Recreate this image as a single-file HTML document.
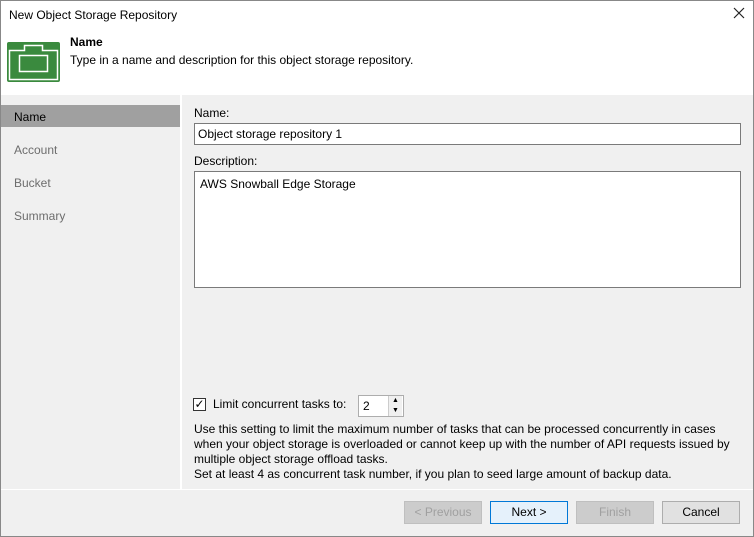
<!DOCTYPE html>
<html><head><style>
*{margin:0;padding:0;box-sizing:border-box}
body{width:754px;height:537px;overflow:hidden;font:12px "Liberation Sans",sans-serif;color:#000;background:#f0f0f0;position:relative}
.win{position:absolute;left:0;top:0;width:754px;height:537px;border:1px solid #888;}
.a{position:absolute;white-space:nowrap}
.btn{position:absolute;top:501px;height:23px;width:78px;border:1px solid #adadad;background:#e1e1e1;text-align:center;line-height:21px}
</style></head><body>
<div class="a" style="left:0;top:0;width:754px;height:95px;background:#fff"></div>
<div class="a" style="left:9px;top:8px">New Object Storage Repository</div>
<svg class="a" style="left:733px;top:7px" width="12" height="12" viewBox="0 0 12 12"><path d="M1 1L11 11M11 1L1 11" stroke="#222" stroke-width="1.2"/></svg>
<svg class="a" style="left:7px;top:42px" width="53" height="40" viewBox="0 0 53 40"><rect x="0" y="0" width="53" height="40" rx="2" fill="#3a8a3e"/><path d="M2.5 8.5H17.5V3.5H35.5V8.5H50.5V37.5H2.5Z" fill="none" stroke="#fff" stroke-width="1.5"/><rect x="12.5" y="13.5" width="28" height="16" fill="none" stroke="#fff" stroke-width="1.5"/></svg>
<div class="a" style="left:70px;top:35px;font-weight:bold">Name</div>
<div class="a" style="left:70px;top:53px">Type in a name and description for this object storage repository.</div>
<div class="a" style="left:180px;top:95px;width:2px;height:394px;background:#fff"></div>
<div class="a" style="left:1px;top:105px;width:179px;height:22px;background:#a0a0a0"></div>
<div class="a" style="left:14px;top:110px">Name</div>
<div class="a" style="left:14px;top:143px;color:#6d6d6d">Account</div>
<div class="a" style="left:14px;top:176px;color:#6d6d6d">Bucket</div>
<div class="a" style="left:14px;top:209px;color:#6d6d6d">Summary</div>
<div class="a" style="left:194px;top:106px">Name:</div>
<div class="a" style="left:194px;top:123px;width:547px;height:22px;background:#fff;border:1px solid #7a7a7a;padding:3px 3px">Object storage repository 1</div>
<div class="a" style="left:194px;top:154px">Description:</div>
<div class="a" style="left:194px;top:171px;width:547px;height:117px;background:#fff;border:1px solid #7a7a7a;padding:5px 5px">AWS Snowball Edge Storage</div>
<div class="a" style="left:193px;top:398px;width:13px;height:13px;border:1px solid #333;background:#fff;font-size:12px;line-height:11px;text-align:center">✓</div>
<div class="a" style="left:213px;top:397px">Limit concurrent tasks to:</div>
<div class="a" style="left:358px;top:395px;width:46px;height:22px;background:#fff;border:1px solid #adadad;padding:3px 4px">2</div>
<div class="a" style="left:388px;top:396px;width:14px;height:20px;background:#f0f0f0;border-left:1px solid #ccc;font-size:7px;text-align:center;line-height:10px">▲<br>▼</div>
<div class="a" style="left:194px;top:422px;line-height:15px">Use this setting to limit the maximum number of tasks that can be processed concurrently in cases<br>when your object storage is overloaded or cannot keep up with the number of API requests issued by<br>multiple object storage offload tasks.<br>Set at least 4 as concurrent task number, if you plan to seed large amount of backup data.</div>
<div class="a" style="left:0;top:489px;width:754px;height:1px;background:#fff"></div>
<div class="btn" style="left:404px;color:#a0a0a0;background:#ccc;border-color:#bfbfbf">&lt; Previous</div>
<div class="btn" style="left:490px;background:#e5f1fb;border-color:#0078d7">Next &gt;</div>
<div class="btn" style="left:576px;color:#a0a0a0;background:#ccc;border-color:#bfbfbf">Finish</div>
<div class="btn" style="left:662px">Cancel</div>
<div class="win"></div>
</body></html>
